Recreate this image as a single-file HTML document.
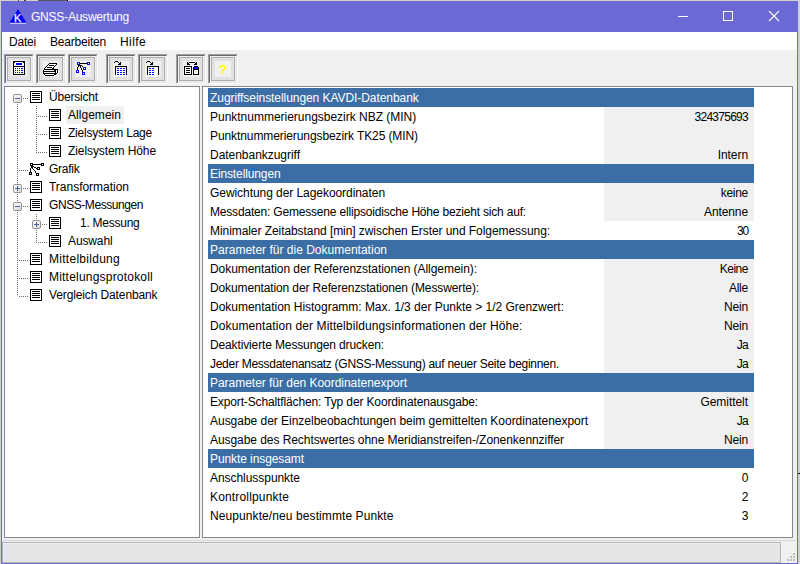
<!DOCTYPE html>
<html><head><meta charset="utf-8"><title>GNSS-Auswertung</title>
<style>
html,body{margin:0;padding:0;}
body{width:800px;height:564px;overflow:hidden;background:#d0d0d0;position:relative;font-family:"Liberation Sans",sans-serif;font-size:12px;color:#000;}
div,span,svg{position:absolute;box-sizing:border-box;white-space:nowrap;}
.win{left:1px;top:1px;width:797px;height:563px;background:#6b69d6;}
.client{left:1px;top:31px;width:795px;height:531px;background:#f0f0f0;}
.title{left:30px;top:1px;height:31px;line-height:31px;color:#fff;}
.menu{left:0;top:0;width:795px;height:18px;background:#fff;}
.menu span{top:1px;height:19px;line-height:19px;}
.tb{top:22px;width:30px;height:30px;border-top:1px solid #a0a0a0;border-left:1px solid #a0a0a0;border-right:1px solid #fff;border-bottom:1px solid #fff;}
.tb i{position:absolute;left:0;top:0;width:28px;height:28px;box-sizing:border-box;border-top:1px solid #696969;border-left:1px solid #696969;border-right:1px solid #e3e3e3;border-bottom:1px solid #e3e3e3;}
.tb b{position:absolute;left:2px;top:2px;width:24px;height:24px;box-sizing:border-box;border:1px solid #adadad;background:#e1e1e1;}
.tb u{position:absolute;left:6px;top:6px;width:16px;height:16px;background:#f0f0f0;}
.pane{background:#fff;border:1px solid #828790;}
.trow{height:18px;line-height:19px;}
.row{left:5px;width:546px;height:19px;line-height:20px;}
.row .l{left:2px;top:0;}
.row .v{right:6px;top:0;}
.h{background:#3a6ea5;color:#fff;}
.gv{left:396px;top:0;width:150px;height:19px;background:#f0f0f0;}
.dot{background:#bfbfbf;width:2px;height:2px;}
</style></head><body>
<div style="left:0;top:0;width:800px;height:1px;background:#d6d3ce"></div><div style="left:38px;top:0;width:29px;height:1px;background:#585858"></div><div style="left:67px;top:0;width:1px;height:1px;background:#000"></div><div style="left:18px;top:0;width:1px;height:1px;background:#404040"></div><div style="left:24px;top:0;width:2px;height:1px;background:#404040"></div>
<div class="win">
<svg style="left:8px;top:8px" width="18" height="16" viewBox="9 9 18 16"><polygon points="18,9.2 26.4,22.6 9.6,22.6" fill="#0000ff"/><rect x="10" y="23" width="16" height="1" fill="#c4c3f0"/><text x="14.1" y="22.3" font-family="Liberation Sans, sans-serif" font-size="11" fill="#fff" stroke="#fff" stroke-width="0.25">K</text></svg>

<div class="title"><span style="letter-spacing:-0.225px;">GNSS-Auswertung</span></div>
<svg style="left:677px;top:10px" width="110" height="12" viewBox="0 0 110 12"><g stroke="#fff" stroke-width="1" fill="none"><path d="M0 5.5H10"/><rect x="45.5" y="0.5" width="9" height="9"/><path d="M91 0L101 10M101 0L91 10" stroke-width="1.1"/></g></svg>
<div class="client">
<div class="menu">
<span style="left:7px"><span style="letter-spacing:-0.203px;position:static">Datei</span></span><span style="left:48px"><span style="letter-spacing:-0.205px;position:static">Bearbeiten</span></span><span style="left:118px"><span style="letter-spacing:0.397px;position:static">Hilfe</span></span>
</div>
<div class="tb" style="left:2px"><i></i><b></b><u style="top:5px"></u><svg style="left:6px;top:5px" width="16" height="16" viewBox="0 0 16 16" shape-rendering="crispEdges"><rect x="2" y="1" width="12" height="14" fill="#000"/><rect x="4" y="2" width="8" height="1" fill="#fff"/><rect x="3" y="3" width="10" height="3" fill="#fff"/><rect x="3" y="7" width="10" height="7" fill="#fafafa"/><rect x="5" y="3" width="6" height="2" fill="#0000ff"/><rect x="4" y="8" width="1" height="1" fill="#0000ff"/><rect x="6" y="8" width="1" height="1" fill="#0000ff"/><rect x="8" y="8" width="1" height="1" fill="#0000ff"/><rect x="10" y="8" width="2" height="1" fill="#0000ff"/><rect x="4" y="10" width="1" height="1" fill="#0000ff"/><rect x="6" y="10" width="1" height="1" fill="#0000ff"/><rect x="8" y="10" width="1" height="1" fill="#0000ff"/><rect x="10" y="10" width="2" height="1" fill="#0000ff"/><rect x="4" y="12" width="1" height="1" fill="#0000ff"/><rect x="6" y="12" width="1" height="1" fill="#0000ff"/><rect x="8" y="12" width="1" height="1" fill="#0000ff"/><rect x="10" y="12" width="2" height="1" fill="#0000ff"/></svg></div>
<div class="tb" style="left:34px"><i></i><b></b><u></u><svg style="left:6px;top:6px" width="16" height="16" viewBox="0 0 16 16" shape-rendering="crispEdges"><rect x="6" y="2" width="8" height="1" fill="#000"/><rect x="5" y="3" width="1" height="1" fill="#000"/><rect x="6" y="3" width="7" height="1" fill="#fff"/><rect x="13" y="3" width="1" height="1" fill="#000"/><rect x="4" y="4" width="1" height="1" fill="#000"/><rect x="5" y="4" width="1" height="1" fill="#fff"/><rect x="6" y="4" width="5" height="1" fill="#000"/><rect x="11" y="4" width="1" height="1" fill="#fff"/><rect x="12" y="4" width="1" height="1" fill="#000"/><rect x="3" y="5" width="1" height="1" fill="#000"/><rect x="4" y="5" width="7" height="1" fill="#fff"/><rect x="11" y="5" width="1" height="1" fill="#000"/><rect x="2" y="6" width="1" height="1" fill="#000"/><rect x="3" y="6" width="1" height="1" fill="#fff"/><rect x="4" y="6" width="5" height="1" fill="#000"/><rect x="9" y="6" width="1" height="1" fill="#fff"/><rect x="10" y="6" width="1" height="1" fill="#000"/><rect x="1" y="7" width="1" height="1" fill="#000"/><rect x="2" y="7" width="7" height="1" fill="#fff"/><rect x="9" y="7" width="2" height="1" fill="#000"/><rect x="1" y="8" width="14" height="1" fill="#000"/><rect x="0" y="9" width="1" height="1" fill="#000"/><rect x="1" y="9" width="10" height="1" fill="#fff"/><rect x="11" y="9" width="2" height="1" fill="#000"/><rect x="13" y="9" width="1" height="1" fill="#fff"/><rect x="14" y="9" width="1" height="1" fill="#000"/><rect x="0" y="10" width="13" height="1" fill="#000"/><rect x="13" y="10" width="1" height="1" fill="#fff"/><rect x="14" y="10" width="1" height="1" fill="#000"/><rect x="0" y="11" width="1" height="1" fill="#000"/><rect x="1" y="11" width="11" height="1" fill="#fff"/><rect x="12" y="11" width="1" height="1" fill="#000"/><rect x="13" y="11" width="1" height="1" fill="#fff"/><rect x="14" y="11" width="1" height="1" fill="#000"/><rect x="0" y="12" width="14" height="1" fill="#000"/><rect x="1" y="13" width="1" height="1" fill="#000"/><rect x="2" y="13" width="9" height="1" fill="#fff"/><rect x="11" y="13" width="2" height="1" fill="#000"/><rect x="2" y="14" width="9" height="1" fill="#000"/></svg></div>
<div class="tb" style="left:66px"><i></i><b></b><u></u><svg style="left:6px;top:6px" width="16" height="16" viewBox="0 0 16 16" shape-rendering="crispEdges"><rect x="3" y="4" width="2" height="1" fill="#000"/><rect x="3" y="5" width="1" height="1" fill="#000"/><rect x="2" y="6" width="1" height="3" fill="#000"/><rect x="5" y="4" width="2" height="1" fill="#000"/><rect x="7" y="5" width="1" height="1" fill="#000"/><rect x="5" y="5" width="1" height="2" fill="#000"/><rect x="6" y="7" width="1" height="2" fill="#000"/><rect x="7" y="9" width="1" height="2" fill="#000"/><rect x="4" y="2" width="8" height="1" fill="#000"/><rect x="2" y="1" width="3" height="3" fill="#0000ff"/><rect x="3" y="2" width="1" height="1" fill="#fff"/><rect x="12" y="1" width="3" height="3" fill="#0000ff"/><rect x="13" y="2" width="1" height="1" fill="#fff"/><rect x="8" y="6" width="3" height="3" fill="#0000ff"/><rect x="9" y="7" width="1" height="1" fill="#fff"/><rect x="1" y="9" width="3" height="3" fill="#0000ff"/><rect x="2" y="10" width="1" height="1" fill="#fff"/><rect x="7" y="11" width="3" height="3" fill="#0000ff"/><rect x="8" y="12" width="1" height="1" fill="#fff"/></svg></div>
<div class="tb" style="left:104px"><i></i><b></b><u></u><svg style="left:6px;top:6px" width="16" height="16" viewBox="0 0 16 16" shape-rendering="crispEdges"><rect x="2" y="5" width="12" height="1" fill="#000"/><rect x="2" y="5" width="1" height="9" fill="#000"/><rect x="13" y="5" width="1" height="9" fill="#000"/><rect x="3" y="6" width="10" height="9" fill="#fff"/><rect x="4" y="7" width="2" height="1" fill="#0000ff"/><rect x="7" y="7" width="2" height="1" fill="#0000ff"/><rect x="10" y="7" width="2" height="1" fill="#0000ff"/><rect x="4" y="9" width="2" height="1" fill="#0000ff"/><rect x="7" y="9" width="2" height="1" fill="#0000ff"/><rect x="10" y="9" width="2" height="1" fill="#0000ff"/><rect x="4" y="11" width="2" height="1" fill="#0000ff"/><rect x="7" y="11" width="2" height="1" fill="#0000ff"/><rect x="10" y="11" width="2" height="1" fill="#0000ff"/><rect x="4" y="13" width="2" height="1" fill="#0000ff"/><rect x="7" y="13" width="2" height="1" fill="#0000ff"/><rect x="10" y="13" width="2" height="1" fill="#0000ff"/><rect x="1" y="1" width="1" height="1" fill="#000"/><rect x="2" y="0" width="3" height="1" fill="#000"/><rect x="5" y="1" width="1" height="1" fill="#000"/><rect x="6" y="2" width="2" height="1" fill="#000"/><rect x="7" y="1" width="1" height="1" fill="#000"/><rect x="5" y="3" width="3" height="1" fill="#000"/></svg></div>
<div class="tb" style="left:136px"><i></i><b></b><u></u><svg style="left:6px;top:6px" width="16" height="16" viewBox="0 0 16 16" shape-rendering="crispEdges"><rect x="2" y="5" width="12" height="1" fill="#000"/><rect x="2" y="5" width="1" height="9" fill="#000"/><rect x="13" y="5" width="1" height="9" fill="#000"/><rect x="3" y="6" width="10" height="9" fill="#fff"/><rect x="4" y="7" width="2" height="1" fill="#0000ff"/><rect x="7" y="7" width="2" height="1" fill="#0000ff"/><rect x="4" y="9" width="2" height="1" fill="#0000ff"/><rect x="7" y="9" width="2" height="1" fill="#0000ff"/><rect x="4" y="11" width="2" height="1" fill="#0000ff"/><rect x="7" y="11" width="2" height="1" fill="#0000ff"/><rect x="4" y="13" width="2" height="1" fill="#0000ff"/><rect x="7" y="13" width="2" height="1" fill="#0000ff"/><rect x="1" y="1" width="1" height="1" fill="#000"/><rect x="2" y="0" width="3" height="1" fill="#000"/><rect x="5" y="1" width="1" height="1" fill="#000"/><rect x="6" y="2" width="2" height="1" fill="#000"/><rect x="7" y="1" width="1" height="1" fill="#000"/><rect x="5" y="3" width="3" height="1" fill="#000"/></svg></div>
<div class="tb" style="left:174px"><i></i><b></b><u></u><svg style="left:6px;top:6px" width="16" height="16" viewBox="0 0 16 16" shape-rendering="crispEdges"><rect x="1" y="5" width="8" height="9" fill="#000"/><rect x="2" y="6" width="6" height="7" fill="#fff"/><rect x="3" y="7" width="4" height="1" fill="#000"/><rect x="3" y="9" width="4" height="1" fill="#000"/><rect x="3" y="11" width="4" height="1" fill="#000"/><rect x="10" y="5" width="6" height="9" fill="#000"/><rect x="11" y="6" width="4" height="2" fill="#0000ff"/><rect x="11" y="9" width="4" height="4" fill="#fff"/><rect x="12" y="10" width="2" height="2" fill="#e0e0e0"/><rect x="10" y="5" width="1" height="1" fill="#f0f0f0"/><rect x="15" y="5" width="1" height="1" fill="#f0f0f0"/><rect x="6" y="1" width="6" height="1" fill="#000"/><rect x="4" y="1" width="1" height="3" fill="#000"/><rect x="5" y="2" width="1" height="2" fill="#000"/><rect x="6" y="3" width="1" height="1" fill="#000"/><rect x="13" y="1" width="1" height="3" fill="#000"/><rect x="12" y="2" width="1" height="2" fill="#000"/><rect x="11" y="3" width="1" height="1" fill="#000"/></svg></div>
<div class="tb" style="left:206px"><i></i><b></b><u></u><svg style="left:6px;top:6px" width="16" height="16" viewBox="0 0 16 16" shape-rendering="crispEdges"><text x="8.1" y="13" text-anchor="middle" font-family="Liberation Sans, sans-serif" font-size="13.5" fill="#ffff00" stroke="#ffff00" stroke-width="0.5" shape-rendering="geometricPrecision">?</text></svg></div>
<div class="pane" style="left:2px;top:54px;width:196px;height:452px">
<div class="trow" style="left:44px;top:1px"><span style="letter-spacing:-0.188px;position:static">Übersicht</span></div>
<svg style="left:25px;top:4px" width="12" height="12" viewBox="0 0 12 12"><rect x="0.5" y="0.5" width="11" height="11" fill="#fff" stroke="#000"/><path d="M2 2.5H10M2 4.5H10M2 6.5H10M2 8.5H10" stroke="#000"/></svg>
<div style="left:61px;top:19px;width:58px;height:18px;background:#f0f0f0"></div>
<div class="trow" style="left:63px;top:19px"><span style="letter-spacing:0.033px;position:static">Allgemein</span></div>
<svg style="left:44px;top:22px" width="12" height="12" viewBox="0 0 12 12"><rect x="0.5" y="0.5" width="11" height="11" fill="#fff" stroke="#000"/><path d="M2 2.5H10M2 4.5H10M2 6.5H10M2 8.5H10" stroke="#000"/></svg>
<div class="trow" style="left:63px;top:37px"><span style="letter-spacing:-0.225px;position:static">Zielsystem Lage</span></div>
<svg style="left:44px;top:40px" width="12" height="12" viewBox="0 0 12 12"><rect x="0.5" y="0.5" width="11" height="11" fill="#fff" stroke="#000"/><path d="M2 2.5H10M2 4.5H10M2 6.5H10M2 8.5H10" stroke="#000"/></svg>
<div class="trow" style="left:63px;top:55px"><span style="letter-spacing:-0.092px;position:static">Zielsystem Höhe</span></div>
<svg style="left:44px;top:58px" width="12" height="12" viewBox="0 0 12 12"><rect x="0.5" y="0.5" width="11" height="11" fill="#fff" stroke="#000"/><path d="M2 2.5H10M2 4.5H10M2 6.5H10M2 8.5H10" stroke="#000"/></svg>
<div class="trow" style="left:44px;top:73px"><span style="letter-spacing:-0.253px;position:static">Grafik</span></div>
<div class="trow" style="left:44px;top:91px"><span style="letter-spacing:-0.018px;position:static">Transformation</span></div>
<svg style="left:25px;top:94px" width="12" height="12" viewBox="0 0 12 12"><rect x="0.5" y="0.5" width="11" height="11" fill="#fff" stroke="#000"/><path d="M2 2.5H10M2 4.5H10M2 6.5H10M2 8.5H10" stroke="#000"/></svg>
<div class="trow" style="left:44px;top:109px"><span style="letter-spacing:-0.432px;position:static">GNSS-Messungen</span></div>
<svg style="left:25px;top:112px" width="12" height="12" viewBox="0 0 12 12"><rect x="0.5" y="0.5" width="11" height="11" fill="#fff" stroke="#000"/><path d="M2 2.5H10M2 4.5H10M2 6.5H10M2 8.5H10" stroke="#000"/></svg>
<div class="trow" style="left:75px;top:127px"><span style="letter-spacing:-0.255px;position:static">1. Messung</span></div>
<svg style="left:44px;top:130px" width="12" height="12" viewBox="0 0 12 12"><rect x="0.5" y="0.5" width="11" height="11" fill="#fff" stroke="#000"/><path d="M2 2.5H10M2 4.5H10M2 6.5H10M2 8.5H10" stroke="#000"/></svg>
<div class="trow" style="left:63px;top:145px"><span style="letter-spacing:-0.123px;position:static">Auswahl</span></div>
<svg style="left:44px;top:148px" width="12" height="12" viewBox="0 0 12 12"><rect x="0.5" y="0.5" width="11" height="11" fill="#fff" stroke="#000"/><path d="M2 2.5H10M2 4.5H10M2 6.5H10M2 8.5H10" stroke="#000"/></svg>
<div class="trow" style="left:44px;top:163px"><span style="letter-spacing:0.279px;position:static">Mittelbildung</span></div>
<svg style="left:25px;top:166px" width="12" height="12" viewBox="0 0 12 12"><rect x="0.5" y="0.5" width="11" height="11" fill="#fff" stroke="#000"/><path d="M2 2.5H10M2 4.5H10M2 6.5H10M2 8.5H10" stroke="#000"/></svg>
<div class="trow" style="left:44px;top:181px"><span style="letter-spacing:0.207px;position:static">Mittelungsprotokoll</span></div>
<svg style="left:25px;top:184px" width="12" height="12" viewBox="0 0 12 12"><rect x="0.5" y="0.5" width="11" height="11" fill="#fff" stroke="#000"/><path d="M2 2.5H10M2 4.5H10M2 6.5H10M2 8.5H10" stroke="#000"/></svg>
<div class="trow" style="left:44px;top:199px"><span style="letter-spacing:-0.118px;position:static">Vergleich Datenbank</span></div>
<svg style="left:25px;top:202px" width="12" height="12" viewBox="0 0 12 12"><rect x="0.5" y="0.5" width="11" height="11" fill="#fff" stroke="#000"/><path d="M2 2.5H10M2 4.5H10M2 6.5H10M2 8.5H10" stroke="#000"/></svg>
<svg style="left:0;top:0" width="194" height="450" viewBox="5 87 194 450" shape-rendering="crispEdges"><g fill="#6d6d6d"><rect x="17" y="104" width="1" height="1"/><rect x="17" y="106" width="1" height="1"/><rect x="17" y="108" width="1" height="1"/><rect x="17" y="110" width="1" height="1"/><rect x="17" y="112" width="1" height="1"/><rect x="17" y="114" width="1" height="1"/><rect x="17" y="116" width="1" height="1"/><rect x="17" y="118" width="1" height="1"/><rect x="17" y="120" width="1" height="1"/><rect x="17" y="122" width="1" height="1"/><rect x="17" y="124" width="1" height="1"/><rect x="17" y="126" width="1" height="1"/><rect x="17" y="128" width="1" height="1"/><rect x="17" y="130" width="1" height="1"/><rect x="17" y="132" width="1" height="1"/><rect x="17" y="134" width="1" height="1"/><rect x="17" y="136" width="1" height="1"/><rect x="17" y="138" width="1" height="1"/><rect x="17" y="140" width="1" height="1"/><rect x="17" y="142" width="1" height="1"/><rect x="17" y="144" width="1" height="1"/><rect x="17" y="146" width="1" height="1"/><rect x="17" y="148" width="1" height="1"/><rect x="17" y="150" width="1" height="1"/><rect x="17" y="152" width="1" height="1"/><rect x="17" y="154" width="1" height="1"/><rect x="17" y="156" width="1" height="1"/><rect x="17" y="158" width="1" height="1"/><rect x="17" y="160" width="1" height="1"/><rect x="17" y="162" width="1" height="1"/><rect x="17" y="164" width="1" height="1"/><rect x="17" y="166" width="1" height="1"/><rect x="17" y="168" width="1" height="1"/><rect x="17" y="170" width="1" height="1"/><rect x="17" y="172" width="1" height="1"/><rect x="17" y="174" width="1" height="1"/><rect x="17" y="176" width="1" height="1"/><rect x="17" y="178" width="1" height="1"/><rect x="17" y="180" width="1" height="1"/><rect x="17" y="182" width="1" height="1"/><rect x="17" y="184" width="1" height="1"/><rect x="17" y="186" width="1" height="1"/><rect x="17" y="188" width="1" height="1"/><rect x="17" y="190" width="1" height="1"/><rect x="17" y="192" width="1" height="1"/><rect x="17" y="194" width="1" height="1"/><rect x="17" y="196" width="1" height="1"/><rect x="17" y="198" width="1" height="1"/><rect x="17" y="200" width="1" height="1"/><rect x="17" y="202" width="1" height="1"/><rect x="17" y="204" width="1" height="1"/><rect x="17" y="206" width="1" height="1"/><rect x="17" y="208" width="1" height="1"/><rect x="17" y="210" width="1" height="1"/><rect x="17" y="212" width="1" height="1"/><rect x="17" y="214" width="1" height="1"/><rect x="17" y="216" width="1" height="1"/><rect x="17" y="218" width="1" height="1"/><rect x="17" y="220" width="1" height="1"/><rect x="17" y="222" width="1" height="1"/><rect x="17" y="224" width="1" height="1"/><rect x="17" y="226" width="1" height="1"/><rect x="17" y="228" width="1" height="1"/><rect x="17" y="230" width="1" height="1"/><rect x="17" y="232" width="1" height="1"/><rect x="17" y="234" width="1" height="1"/><rect x="17" y="236" width="1" height="1"/><rect x="17" y="238" width="1" height="1"/><rect x="17" y="240" width="1" height="1"/><rect x="17" y="242" width="1" height="1"/><rect x="17" y="244" width="1" height="1"/><rect x="17" y="246" width="1" height="1"/><rect x="17" y="248" width="1" height="1"/><rect x="17" y="250" width="1" height="1"/><rect x="17" y="252" width="1" height="1"/><rect x="17" y="254" width="1" height="1"/><rect x="17" y="256" width="1" height="1"/><rect x="17" y="258" width="1" height="1"/><rect x="17" y="260" width="1" height="1"/><rect x="17" y="262" width="1" height="1"/><rect x="17" y="264" width="1" height="1"/><rect x="17" y="266" width="1" height="1"/><rect x="17" y="268" width="1" height="1"/><rect x="17" y="270" width="1" height="1"/><rect x="17" y="272" width="1" height="1"/><rect x="17" y="274" width="1" height="1"/><rect x="17" y="276" width="1" height="1"/><rect x="17" y="278" width="1" height="1"/><rect x="17" y="280" width="1" height="1"/><rect x="17" y="282" width="1" height="1"/><rect x="17" y="284" width="1" height="1"/><rect x="17" y="286" width="1" height="1"/><rect x="17" y="288" width="1" height="1"/><rect x="17" y="290" width="1" height="1"/><rect x="17" y="292" width="1" height="1"/><rect x="17" y="294" width="1" height="1"/><rect x="23" y="98" width="1" height="1"/><rect x="25" y="98" width="1" height="1"/><rect x="27" y="98" width="1" height="1"/><rect x="23" y="188" width="1" height="1"/><rect x="25" y="188" width="1" height="1"/><rect x="27" y="188" width="1" height="1"/><rect x="23" y="206" width="1" height="1"/><rect x="25" y="206" width="1" height="1"/><rect x="27" y="206" width="1" height="1"/><rect x="19" y="170" width="1" height="1"/><rect x="21" y="170" width="1" height="1"/><rect x="23" y="170" width="1" height="1"/><rect x="25" y="170" width="1" height="1"/><rect x="27" y="170" width="1" height="1"/><rect x="19" y="260" width="1" height="1"/><rect x="21" y="260" width="1" height="1"/><rect x="23" y="260" width="1" height="1"/><rect x="25" y="260" width="1" height="1"/><rect x="27" y="260" width="1" height="1"/><rect x="19" y="278" width="1" height="1"/><rect x="21" y="278" width="1" height="1"/><rect x="23" y="278" width="1" height="1"/><rect x="25" y="278" width="1" height="1"/><rect x="27" y="278" width="1" height="1"/><rect x="19" y="296" width="1" height="1"/><rect x="21" y="296" width="1" height="1"/><rect x="23" y="296" width="1" height="1"/><rect x="25" y="296" width="1" height="1"/><rect x="27" y="296" width="1" height="1"/><rect x="36" y="106" width="1" height="1"/><rect x="36" y="108" width="1" height="1"/><rect x="36" y="110" width="1" height="1"/><rect x="36" y="112" width="1" height="1"/><rect x="36" y="114" width="1" height="1"/><rect x="36" y="116" width="1" height="1"/><rect x="36" y="118" width="1" height="1"/><rect x="36" y="120" width="1" height="1"/><rect x="36" y="122" width="1" height="1"/><rect x="36" y="124" width="1" height="1"/><rect x="36" y="126" width="1" height="1"/><rect x="36" y="128" width="1" height="1"/><rect x="36" y="130" width="1" height="1"/><rect x="36" y="132" width="1" height="1"/><rect x="36" y="134" width="1" height="1"/><rect x="36" y="136" width="1" height="1"/><rect x="36" y="138" width="1" height="1"/><rect x="36" y="140" width="1" height="1"/><rect x="36" y="142" width="1" height="1"/><rect x="36" y="144" width="1" height="1"/><rect x="36" y="146" width="1" height="1"/><rect x="36" y="148" width="1" height="1"/><rect x="36" y="150" width="1" height="1"/><rect x="36" y="152" width="1" height="1"/><rect x="38" y="116" width="1" height="1"/><rect x="40" y="116" width="1" height="1"/><rect x="42" y="116" width="1" height="1"/><rect x="44" y="116" width="1" height="1"/><rect x="46" y="116" width="1" height="1"/><rect x="38" y="134" width="1" height="1"/><rect x="40" y="134" width="1" height="1"/><rect x="42" y="134" width="1" height="1"/><rect x="44" y="134" width="1" height="1"/><rect x="46" y="134" width="1" height="1"/><rect x="38" y="152" width="1" height="1"/><rect x="40" y="152" width="1" height="1"/><rect x="42" y="152" width="1" height="1"/><rect x="44" y="152" width="1" height="1"/><rect x="46" y="152" width="1" height="1"/><rect x="36" y="214" width="1" height="1"/><rect x="36" y="216" width="1" height="1"/><rect x="36" y="218" width="1" height="1"/><rect x="36" y="220" width="1" height="1"/><rect x="36" y="222" width="1" height="1"/><rect x="36" y="224" width="1" height="1"/><rect x="36" y="226" width="1" height="1"/><rect x="36" y="228" width="1" height="1"/><rect x="36" y="230" width="1" height="1"/><rect x="36" y="232" width="1" height="1"/><rect x="36" y="234" width="1" height="1"/><rect x="36" y="236" width="1" height="1"/><rect x="36" y="238" width="1" height="1"/><rect x="36" y="240" width="1" height="1"/><rect x="36" y="242" width="1" height="1"/><rect x="42" y="224" width="1" height="1"/><rect x="44" y="224" width="1" height="1"/><rect x="46" y="224" width="1" height="1"/><rect x="38" y="242" width="1" height="1"/><rect x="40" y="242" width="1" height="1"/><rect x="42" y="242" width="1" height="1"/><rect x="44" y="242" width="1" height="1"/><rect x="46" y="242" width="1" height="1"/></g><g shape-rendering="geometricPrecision"><defs><linearGradient id="g1798" x1="0" y1="0" x2="1" y2="1"><stop offset="0" stop-color="#fff"/><stop offset="1" stop-color="#d8d6d0"/></linearGradient></defs><rect x="13.5" y="94.5" width="8" height="8" rx="1.2" fill="url(#g1798)" stroke="#919191"/></g><rect x="15" y="98" width="5" height="1" fill="#4b63a7"/><g shape-rendering="geometricPrecision"><defs><linearGradient id="g17188" x1="0" y1="0" x2="1" y2="1"><stop offset="0" stop-color="#fff"/><stop offset="1" stop-color="#d8d6d0"/></linearGradient></defs><rect x="13.5" y="184.5" width="8" height="8" rx="1.2" fill="url(#g17188)" stroke="#919191"/></g><rect x="15" y="188" width="5" height="1" fill="#4b63a7"/><rect x="17" y="186" width="1" height="5" fill="#4b63a7"/><g shape-rendering="geometricPrecision"><defs><linearGradient id="g17206" x1="0" y1="0" x2="1" y2="1"><stop offset="0" stop-color="#fff"/><stop offset="1" stop-color="#d8d6d0"/></linearGradient></defs><rect x="13.5" y="202.5" width="8" height="8" rx="1.2" fill="url(#g17206)" stroke="#919191"/></g><rect x="15" y="206" width="5" height="1" fill="#4b63a7"/><g shape-rendering="geometricPrecision"><defs><linearGradient id="g36224" x1="0" y1="0" x2="1" y2="1"><stop offset="0" stop-color="#fff"/><stop offset="1" stop-color="#d8d6d0"/></linearGradient></defs><rect x="32.5" y="220.5" width="8" height="8" rx="1.2" fill="url(#g36224)" stroke="#919191"/></g><rect x="34" y="224" width="5" height="1" fill="#4b63a7"/><rect x="36" y="222" width="1" height="5" fill="#4b63a7"/><rect x="33" y="164" width="8" height="1" fill="#000"/><rect x="31" y="166" width="1" height="2" fill="#000"/><rect x="30" y="168" width="1" height="4" fill="#000"/><rect x="32" y="166" width="2" height="1" fill="#000"/><rect x="34" y="167" width="2" height="1" fill="#000"/><rect x="36" y="168" width="1" height="1" fill="#000"/><rect x="32" y="167" width="1" height="2" fill="#000"/><rect x="33" y="169" width="1" height="1" fill="#000"/><rect x="34" y="170" width="1" height="1" fill="#000"/><rect x="35" y="171" width="1" height="2" fill="#000"/><rect x="30" y="163" width="3" height="3" fill="#000"/><rect x="31" y="164" width="1" height="1" fill="#fff"/><rect x="41" y="163" width="3" height="3" fill="#000"/><rect x="42" y="164" width="1" height="1" fill="#fff"/><rect x="37" y="167" width="3" height="3" fill="#000"/><rect x="38" y="168" width="1" height="1" fill="#fff"/><rect x="29" y="172" width="3" height="3" fill="#000"/><rect x="30" y="173" width="1" height="1" fill="#fff"/><rect x="36" y="173" width="3" height="3" fill="#000"/><rect x="37" y="174" width="1" height="1" fill="#fff"/></svg>
</div>
<div class="pane" style="left:200px;top:54px;width:591px;height:452px">
<div class="row h" style="top:1px">
<span class="l"><span style="letter-spacing:-0.061px;position:static">Zugriffseinstellungen KAVDI-Datenbank</span></span>
</div>
<div class="row" style="top:20px">
<div class="gv"></div>
<span class="l"><span style="letter-spacing:-0.014px;position:static">Punktnummerierungsbezirk NBZ (MIN)</span></span>
<span class="v"><span style="letter-spacing:-0.731px;position:static">324375693</span></span>
</div>
<div class="row" style="top:39px">
<div class="gv"></div>
<span class="l"><span style="letter-spacing:-0.091px;position:static">Punktnummerierungsbezirk TK25 (MIN)</span></span>
</div>
<div class="row" style="top:58px">
<div class="gv"></div>
<span class="l"><span style="letter-spacing:-0.032px;position:static">Datenbankzugriff</span></span>
<span class="v"><span style="letter-spacing:-0.065px;position:static">Intern</span></span>
</div>
<div class="row h" style="top:77px">
<span class="l"><span style="letter-spacing:-0.12px;position:static">Einstellungen</span></span>
</div>
<div class="row" style="top:96px">
<div class="gv"></div>
<span class="l"><span style="letter-spacing:-0.06px;position:static">Gewichtung der Lagekoordinaten</span></span>
<span class="v"><span style="letter-spacing:-0.277px;position:static">keine</span></span>
</div>
<div class="row" style="top:115px">
<div class="gv"></div>
<span class="l"><span style="letter-spacing:-0.187px;position:static">Messdaten: Gemessene ellipsoidische Höhe bezieht sich auf:</span></span>
<span class="v"><span style="letter-spacing:-0.103px;position:static">Antenne</span></span>
</div>
<div class="row" style="top:134px">
<span class="l"><span style="letter-spacing:-0.068px;position:static">Minimaler Zeitabstand [min] zwischen Erster und Folgemessung:</span></span>
<span class="v"><span style="letter-spacing:-1.18px;position:static">30</span></span>
</div>
<div class="row h" style="top:153px">
<span class="l"><span style="letter-spacing:0.008px;position:static">Parameter für die Dokumentation</span></span>
</div>
<div class="row" style="top:172px">
<div class="gv"></div>
<span class="l"><span style="letter-spacing:-0.052px;position:static">Dokumentation der Referenzstationen (Allgemein):</span></span>
<span class="v"><span style="letter-spacing:-0.481px;position:static">Keine</span></span>
</div>
<div class="row" style="top:191px">
<div class="gv"></div>
<span class="l"><span style="letter-spacing:-0.121px;position:static">Dokumentation der Referenzstationen (Messwerte):</span></span>
<span class="v"><span style="letter-spacing:-0.229px;position:static">Alle</span></span>
</div>
<div class="row" style="top:210px">
<div class="gv"></div>
<span class="l"><span style="letter-spacing:-0.019px;position:static">Dokumentation Histogramm: Max. 1/3 der Punkte &gt; 1/2 Grenzwert:</span></span>
<span class="v"><span style="letter-spacing:-0.147px;position:static">Nein</span></span>
</div>
<div class="row" style="top:229px">
<div class="gv"></div>
<span class="l"><span style="letter-spacing:0.103px;position:static">Dokumentation der Mittelbildungsinformationen der Höhe:</span></span>
<span class="v"><span style="letter-spacing:-0.147px;position:static">Nein</span></span>
</div>
<div class="row" style="top:248px">
<div class="gv"></div>
<span class="l"><span style="letter-spacing:-0.132px;position:static">Deaktivierte Messungen drucken:</span></span>
<span class="v"><span style="letter-spacing:-0.744px;position:static">Ja</span></span>
</div>
<div class="row" style="top:267px">
<div class="gv"></div>
<span class="l"><span style="letter-spacing:-0.278px;position:static">Jeder Messdatenansatz (GNSS-Messung) auf neuer Seite beginnen.</span></span>
<span class="v"><span style="letter-spacing:-0.744px;position:static">Ja</span></span>
</div>
<div class="row h" style="top:286px">
<span class="l"><span style="letter-spacing:-0.032px;position:static">Parameter für den Koordinatenexport</span></span>
</div>
<div class="row" style="top:305px">
<div class="gv"></div>
<span class="l"><span style="letter-spacing:-0.135px;position:static">Export-Schaltflächen: Typ der Koordinatenausgabe:</span></span>
<span class="v"><span style="letter-spacing:-0.046px;position:static">Gemittelt</span></span>
</div>
<div class="row" style="top:324px">
<div class="gv"></div>
<span class="l"><span style="letter-spacing:-0.024px;position:static">Ausgabe der Einzelbeobachtungen beim gemittelten Koordinatenexport</span></span>
<span class="v"><span style="letter-spacing:-0.744px;position:static">Ja</span></span>
</div>
<div class="row" style="top:343px">
<div class="gv"></div>
<span class="l"><span style="letter-spacing:-0.063px;position:static">Ausgabe des Rechtswertes ohne Meridianstreifen-/Zonenkennziffer</span></span>
<span class="v"><span style="letter-spacing:-0.147px;position:static">Nein</span></span>
</div>
<div class="row h" style="top:362px">
<span class="l"><span style="letter-spacing:-0.087px;position:static">Punkte insgesamt</span></span>
</div>
<div class="row" style="top:381px">
<span class="l"><span style="letter-spacing:-0.049px;position:static">Anschlusspunkte</span></span>
<span class="v"><span style="letter-spacing:-0.487px;position:static">0</span></span>
</div>
<div class="row" style="top:400px">
<span class="l"><span style="letter-spacing:0.163px;position:static">Kontrollpunkte</span></span>
<span class="v"><span style="letter-spacing:-0.487px;position:static">2</span></span>
</div>
<div class="row" style="top:419px">
<span class="l"><span style="letter-spacing:0.091px;position:static">Neupunkte/neu bestimmte Punkte</span></span>
<span class="v"><span style="letter-spacing:-0.487px;position:static">3</span></span>
</div>
</div>
<div style="left:0;top:508px;width:795px;height:1px;background:#d7d7d7"></div>
<div style="left:0;top:510px;width:779px;height:21px;background:#e5e5e5;border:1px solid #b4b4b4;box-shadow:inset 1px 1px 0 #ececec"></div>
<div class="dot" style="left:791px;top:521px"></div>
<div class="dot" style="left:788px;top:524px"></div>
<div class="dot" style="left:791px;top:524px"></div>
<div class="dot" style="left:785px;top:527px"></div>
<div class="dot" style="left:788px;top:527px"></div>
<div class="dot" style="left:791px;top:527px"></div>
</div></div><div style="left:798px;top:473px;width:2px;height:1px;background:#000"></div></body></html>
